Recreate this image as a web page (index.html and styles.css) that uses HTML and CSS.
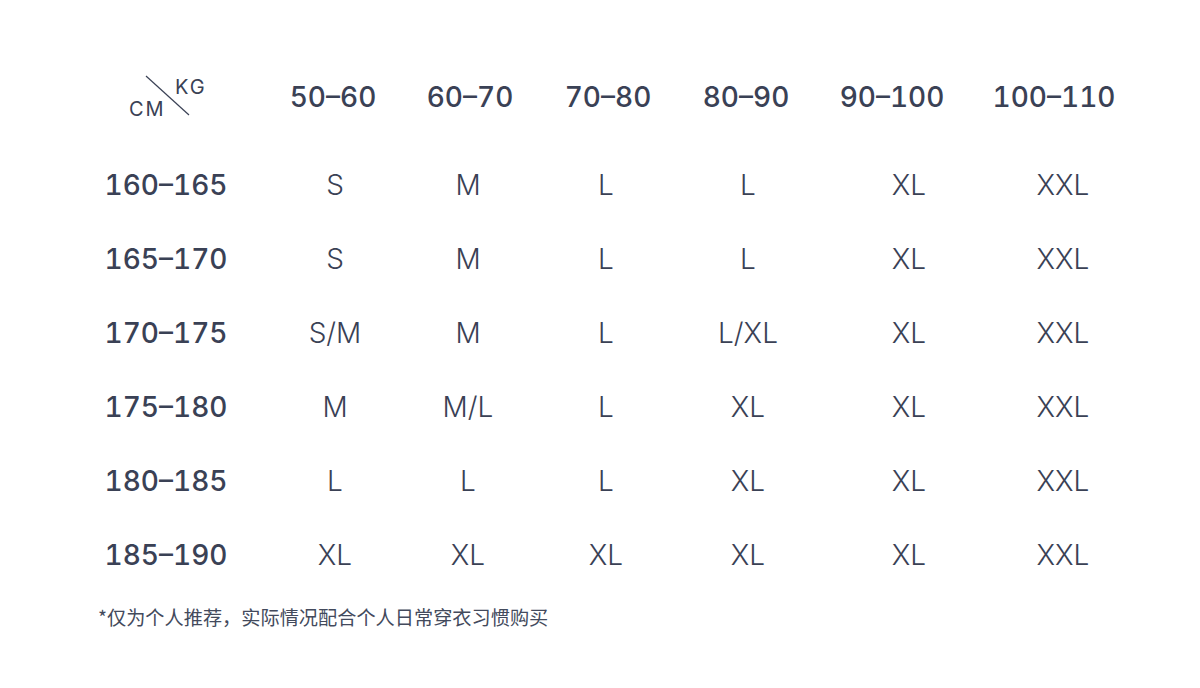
FILE: index.html
```html
<!DOCTYPE html>
<html lang="zh-CN">
<head>
<meta charset="utf-8">
<link rel="stylesheet" href="styles.css">
</head>
<body>
<div class="page">
  <div class="row head">
    <div class="label corner">
      <span class="kg">KG</span>
      <span class="cm">CM</span>
      <svg class="diag" width="46" height="42" viewBox="0 0 46 42"><line x1="1" y1="1" x2="44" y2="40" stroke="#3a4155" stroke-width="1.2"/></svg>
    </div>
    <div class="cell">50–60</div>
    <div class="cell">60–70</div>
    <div class="cell">70–80</div>
    <div class="cell">80–90</div>
    <div class="cell">90–100</div>
    <div class="cell">100–110</div>
  </div>
  <div class="body">
    <div class="row"><div class="label">160–165</div><div class="cell">S</div><div class="cell">M</div><div class="cell">L</div><div class="cell">L</div><div class="cell">XL</div><div class="cell">XXL</div></div>
    <div class="row"><div class="label">165–170</div><div class="cell">S</div><div class="cell">M</div><div class="cell">L</div><div class="cell">L</div><div class="cell">XL</div><div class="cell">XXL</div></div>
    <div class="row"><div class="label">170–175</div><div class="cell">S/M</div><div class="cell">M</div><div class="cell">L</div><div class="cell">L/XL</div><div class="cell">XL</div><div class="cell">XXL</div></div>
    <div class="row"><div class="label">175–180</div><div class="cell">M</div><div class="cell">M/L</div><div class="cell">L</div><div class="cell">XL</div><div class="cell">XL</div><div class="cell">XXL</div></div>
    <div class="row"><div class="label">180–185</div><div class="cell">L</div><div class="cell">L</div><div class="cell">L</div><div class="cell">XL</div><div class="cell">XL</div><div class="cell">XXL</div></div>
    <div class="row"><div class="label">185–190</div><div class="cell">XL</div><div class="cell">XL</div><div class="cell">XL</div><div class="cell">XL</div><div class="cell">XL</div><div class="cell">XXL</div></div>
  </div>
  <p class="note">*仅为个人推荐，实际情况配合个人日常穿衣习惯购买</p>
</div>
</body>
</html>
```

FILE: styles.css
```css
* { box-sizing: border-box; }
html, body { margin: 0; padding: 0; background: #fff; }
body {
  width: 1200px;
  height: 688px;
  overflow: hidden;
  font-family: Inter, "Noto Sans", "Noto Sans CJK SC", sans-serif;
  color: #3a4155;
}
.page {
  padding: 60px 0 0 86px;
}
.row {
  display: flex;
  align-items: center;
  height: 74px;
}
.head {
  margin-bottom: 14px;
}
.label {
  width: 160px;
  flex: none;
  text-align: center;
  font-size: 28px;
  font-weight: 500;
  font-variant-numeric: tabular-nums;
}
.cell {
  width: 130px;
  flex: none;
  text-align: center;
  font-size: 28px;
  font-weight: 300;
}
.head .cell {
  font-weight: 500;
  font-size: 28px;
  font-variant-numeric: tabular-nums;
}

.body .cell:nth-child(2) { margin-left: 24px; }
.body .cell:nth-child(3) { margin-left: 3px; }
.body .cell:nth-child(4) { margin-left: 8px; }
.body .cell:nth-child(5) { margin-left: 12px; }
.body .cell:nth-child(6) { margin-left: 31px; }
.body .cell:nth-child(7) { margin-left: 24px; }

.head .cell:nth-child(2) { margin-left: 22px; }
.head .cell:nth-child(3) { margin-left: 7px; }
.head .cell:nth-child(4) { margin-left: 8px; }
.head .cell:nth-child(5) { margin-left: 8px; }
.head .cell:nth-child(6) { margin-left: 16px; }
.head .cell:nth-child(7) { margin-left: 32px; }

.corner {
  position: relative;
  height: 74px;
}
.corner .kg, .corner .cm {
  position: absolute;
  font-size: 20px;
  font-weight: 400;
  letter-spacing: 2px;
  line-height: 1;
}
.corner .kg { left: 89px; top: 17px; }
.corner .cm { left: 43px; top: 39px; }
.corner .diag { position: absolute; left: 59px; top: 15px; }

.note {
  margin: 12px 0 0 12px;
  font-family: "Noto Sans CJK SC", sans-serif;
  font-size: 19.2px;
  line-height: 26px;
  color: #434a5c;
}
```
